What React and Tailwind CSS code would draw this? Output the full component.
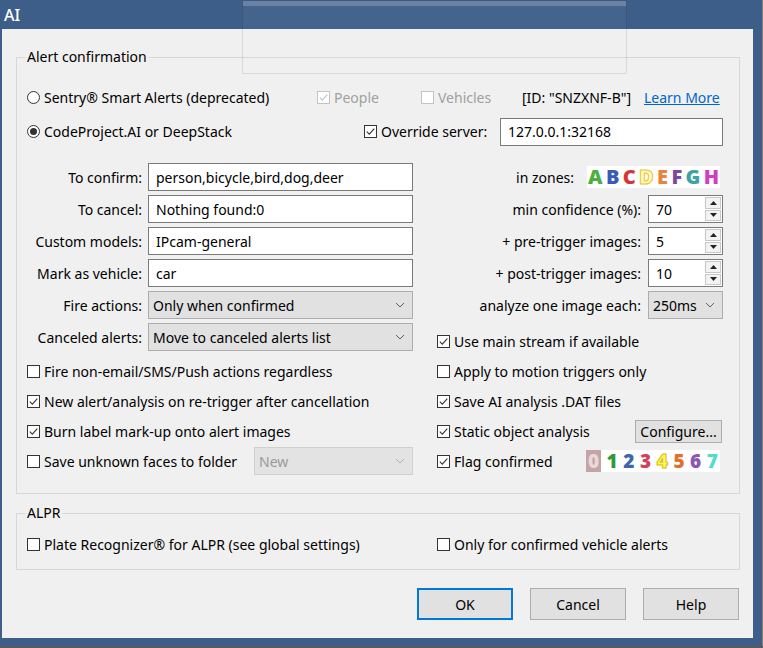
import React from 'react';

const Check = ({ checked, disabled }) => (
  <span
    className={`w-[13px] h-[13px] border bg-white flex items-center justify-center shrink-0 ${
      disabled ? 'border-[#c4c4c4]' : 'border-[#333333]'
    }`}
  >
    {checked && (
      <svg width="11" height="11" viewBox="0 0 11 11">
        <path
          d="M1.8 5.6 L4.3 8.1 L9.3 2.6"
          fill="none"
          stroke={disabled ? '#c4c4c4' : '#333333'}
          strokeWidth="1.1"
        />
      </svg>
    )}
  </span>
);

const Radio = ({ checked }) => (
  <span className="w-[13px] h-[13px] rounded-full border border-[#333333] bg-white flex items-center justify-center shrink-0">
    {checked && <span className="w-[7px] h-[7px] rounded-full bg-[#333333]" />}
  </span>
);

const CheckRow = ({ checked, label, disabled, className = '' }) => (
  <div className={`flex items-center gap-[4px] ${className}`}>
    <Check checked={checked} disabled={disabled} />
    <span className={disabled ? 'text-[#a0a0a0]' : ''}>{label}</span>
  </div>
);

const Chevron = ({ color = '#606060' }) => (
  <svg width="10" height="6" viewBox="0 0 10 6" className="shrink-0">
    <path d="M1 1 L5 5 L9 1" fill="none" stroke={color} strokeWidth="1" />
  </svg>
);

const TextBox = ({ value, className = '' }) => (
  <div className={`h-[28px] border border-[#7a7a7a] bg-white flex items-center px-[7px] ${className}`}>
    {value}
  </div>
);

const Select = ({ value, disabled, className = '' }) => (
  <div
    className={`h-[28px] border flex items-center justify-between pl-[4px] pr-[7px] ${
      disabled
        ? 'bg-[#e3e3e3] border-[#d0d0d0] text-[#9a9a9a]'
        : 'bg-[#e1e1e1] border-[#adadad]'
    } ${className}`}
  >
    <span>{value}</span>
    <Chevron color={disabled ? '#b0b0b0' : '#606060'} />
  </div>
);

const Spinner = ({ value }) => (
  <div className="w-[75px] h-[28px] border border-[#7a7a7a] bg-white flex">
    <span className="flex-1 flex items-center pl-[7px]">{value}</span>
    <div className="w-[17px] flex flex-col gap-[1px] py-[1px] pr-[1px]">
      <span className="flex-1 border border-[#c8c8c8] bg-[#f3f3f3] flex items-center justify-center">
        <svg width="7" height="4" viewBox="0 0 7 4">
          <path d="M0 4 L3.5 0 L7 4 Z" fill="#222" />
        </svg>
      </span>
      <span className="flex-1 border border-[#c8c8c8] bg-[#f3f3f3] flex items-center justify-center">
        <svg width="7" height="4" viewBox="0 0 7 4">
          <path d="M0 0 L3.5 4 L7 0 Z" fill="#222" />
        </svg>
      </span>
    </div>
  </div>
);

const zones = [
  { ch: 'A', cls: 'text-[#4cae3f]' },
  { ch: 'B', cls: 'text-[#3a5cb8]' },
  { ch: 'C', cls: 'text-[#d6343a]' },
  { ch: 'D', cls: 'text-[#fff8c8] [-webkit-text-stroke:1px_#e6c81e]' },
  { ch: 'E', cls: 'text-[#e8843c]' },
  { ch: 'F', cls: 'text-[#7a4a9e]' },
  { ch: 'G', cls: 'text-[#3ea3a3]' },
  { ch: 'H', cls: 'text-[#d23fbe]' },
];

const flags = [
  { ch: '1', cls: 'text-[#2f9a3a]' },
  { ch: '2', cls: 'text-[#3a68a8]' },
  { ch: '3', cls: 'text-[#d2405e]' },
  { ch: '4', cls: 'text-[#fff36a] [-webkit-text-stroke:1px_#d6c200]' },
  { ch: '5', cls: 'text-[#e2702c]' },
  { ch: '6', cls: 'text-[#8a56b4]' },
  { ch: '7', cls: 'text-[#54dccb]' },
];

const GroupBox = ({ title, className = '', children }) => (
  <div className={`relative ml-[14px] w-[724px] border border-[#d7d7d7] ${className}`}>
    <span className="absolute left-[8px] -top-[11px] px-[2px] bg-[#f0f0f0] leading-[20px]">{title}</span>
    {children}
  </div>
);

const leftFields = [
  { label: 'To confirm:', value: 'person,bicycle,bird,dog,deer' },
  { label: 'To cancel:', value: 'Nothing found:0' },
  { label: 'Custom models:', value: 'IPcam-general' },
  { label: 'Mark as vehicle:', value: 'car' },
];

const rightSpinners = [
  { label: 'min confidence (%):', value: '70' },
  { label: '+ pre-trigger images:', value: '5' },
  { label: '+ post-trigger images:', value: '10' },
];

export default function App() {
  return (
    <div className="relative w-[763px] h-[648px] overflow-hidden bg-[#3e5e8a] font-['Noto_Sans',sans-serif] text-[14px] text-black">
      {/* title bar */}
      <div className="h-[29px] flex items-center pl-[4px] text-white text-[16px] font-medium">AI</div>

      {/* dialog body */}
      <div className="ml-[2px] w-[751px] h-[609px] bg-[#f0f0f0] flex flex-col">
        <GroupBox title="Alert confirmation" className="mt-[28px] h-[437px]">
          <div className="pl-[10px]">
            <div className="mt-[24px] h-[30px] flex items-center">
              <div className="w-[290px] flex items-center gap-[4px]">
                <Radio />
                <span>Sentry® Smart Alerts (deprecated)</span>
              </div>
              <CheckRow className="w-[104px]" checked disabled label="People" />
              <CheckRow className="w-[101px]" disabled label="Vehicles" />
              <span className="w-[122px]">[ID: "SNZXNF-B"]</span>
              <span className="text-[#0066cc] underline">Learn More</span>
            </div>

            <div className="mt-[5px] h-[29px] flex items-center">
              <div className="w-[337px] flex items-center gap-[4px]">
                <Radio checked />
                <span>CodeProject.AI or DeepStack</span>
              </div>
              <CheckRow className="w-[136px]" checked label="Override server:" />
              <TextBox className="w-[223px]" value="127.0.0.1:32168" />
            </div>

            <div className="mt-[17px] flex">
              <div className="w-[386px] flex flex-col gap-[4px]">
                {leftFields.map((f) => (
                  <div key={f.label} className="h-[28px] flex items-center">
                    <span className="w-[115px] text-right">{f.label}</span>
                    <TextBox className="ml-[6px] w-[265px]" value={f.value} />
                  </div>
                ))}
                <div className="h-[28px] flex items-center">
                  <span className="w-[115px] text-right">Fire actions:</span>
                  <Select className="ml-[6px] w-[265px]" value="Only when confirmed" />
                </div>
                <div className="h-[28px] flex items-center">
                  <span className="w-[115px] text-right">Canceled alerts:</span>
                  <Select className="ml-[6px] w-[265px]" value="Move to canceled alerts list" />
                </div>
              </div>

              <div className="ml-[24px] w-[286px] flex flex-col gap-[4px]">
                <div className="h-[28px] flex items-center justify-end pr-[3px]">
                  <span>in zones:</span>
                  <div className="ml-[13px] w-[133px] h-[22px] bg-white flex items-center justify-between px-[1px] font-['Open_Sans',sans-serif] font-extrabold text-[20px] leading-none">
                    {zones.map((z) => (
                      <span key={z.ch} className={z.cls}>{z.ch}</span>
                    ))}
                  </div>
                </div>
                {rightSpinners.map((s) => (
                  <div key={s.label} className="h-[28px] flex items-center justify-end">
                    <span>{s.label}</span>
                    <div className="ml-[7px]">
                      <Spinner value={s.value} />
                    </div>
                  </div>
                ))}
                <div className="h-[28px] flex items-center justify-end">
                  <span>analyze one image each:</span>
                  <Select className="ml-[7px] w-[75px]" value="250ms" />
                </div>
                <CheckRow className="mt-[3px] h-[30px]" checked label="Use main stream if available" />
              </div>
            </div>

            <div className="flex">
              <div className="w-[386px] flex flex-col">
                <CheckRow className="h-[30px]" label="Fire non-email/SMS/Push actions regardless" />
                <CheckRow className="h-[30px]" checked label="New alert/analysis on re-trigger after cancellation" />
                <CheckRow className="h-[30px]" checked label="Burn label mark-up onto alert images" />
                <div className="h-[30px] flex items-center justify-between">
                  <CheckRow label="Save unknown faces to folder" />
                  <Select disabled className="w-[159px]" value="New" />
                </div>
              </div>
              <div className="ml-[24px] w-[286px] flex flex-col">
                <CheckRow className="h-[30px]" label="Apply to motion triggers only" />
                <CheckRow className="h-[30px]" checked label="Save AI analysis .DAT files" />
                <div className="h-[30px] flex items-center justify-between pr-[1px]">
                  <CheckRow checked label="Static object analysis" />
                  <button className="w-[87px] h-[23px] bg-[#e1e1e1] border border-[#adadad] flex items-center justify-center">
                    Configure...
                  </button>
                </div>
                <div className="h-[30px] flex items-center justify-between pr-[3px]">
                  <CheckRow checked label="Flag confirmed" />
                  <div className="w-[134px] h-[22px] bg-white flex items-center justify-between pr-[2px] font-['Open_Sans',sans-serif] font-extrabold text-[19px] leading-none">
                    <span className="w-[15px] h-[22px] bg-[#c4a4a4] text-[#e8dada] flex items-center justify-center">0</span>
                    {flags.map((f) => (
                      <span key={f.ch} className={f.cls}>{f.ch}</span>
                    ))}
                  </div>
                </div>
              </div>
            </div>
          </div>
        </GroupBox>

        <GroupBox title="ALPR" className="mt-[19px] h-[57px]">
          <div className="pl-[10px] mt-[15px] h-[30px] flex items-center">
            <CheckRow className="w-[410px]" label="Plate Recognizer® for ALPR (see global settings)" />
            <CheckRow label="Only for confirmed vehicle alerts" />
          </div>
        </GroupBox>

        <div className="mt-[18px] mr-[14px] flex justify-end gap-[17px]">
          <button className="w-[96px] h-[32px] bg-[#e1e1e1] border-2 border-[#0078d7]">OK</button>
          <button className="w-[96px] h-[32px] bg-[#e1e1e1] border border-[#adadad]">Cancel</button>
          <button className="w-[96px] h-[32px] bg-[#e1e1e1] border border-[#adadad]">Help</button>
        </div>
      </div>

      {/* frame edges */}
      <div className="absolute right-0 top-0 w-[1px] h-full bg-[#8a7c74]" />
      <div className="absolute left-0 bottom-0 w-full h-[2px] bg-[#5a5a5a]" />

      {/* translucent window ghost over the top */}
      <div className="absolute left-[242px] top-0 w-[385px] h-[74px] border border-black/10 bg-white/[0.03] rounded-b-[2px]">
        <div className="h-[5px] bg-white/20" />
      </div>
    </div>
  );
}
